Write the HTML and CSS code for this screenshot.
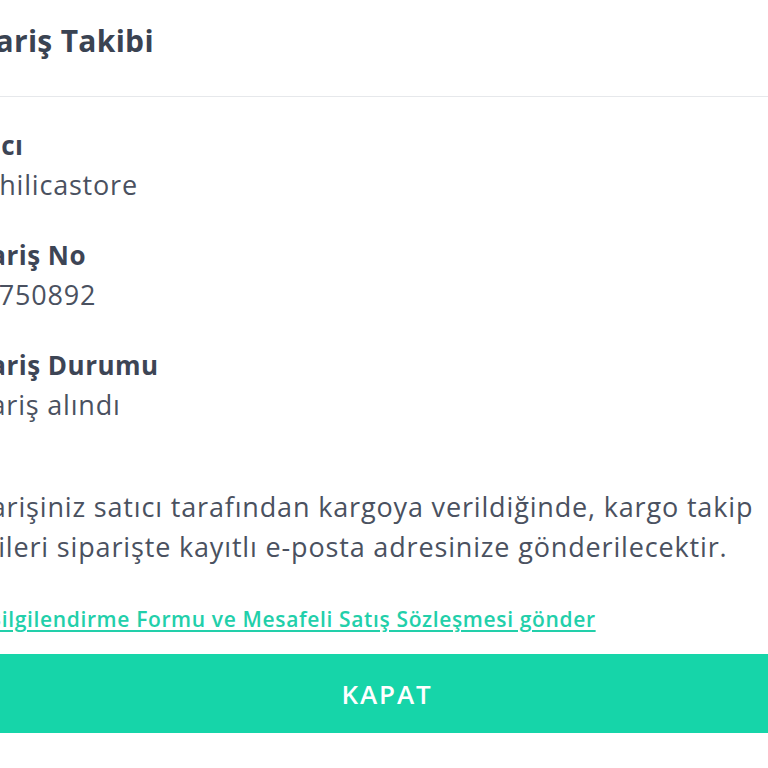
FILE: index.html
```html
<!DOCTYPE html>
<html lang="tr">
<head>
<meta charset="utf-8">
<title>Sipariş Takibi</title>
<link rel="stylesheet" href="styles.css">
</head>
<body>
<div class="modal">
  <header class="modal-header">
    <h2 class="modal-title">Sipariş Takibi</h2>
  </header>
  <div class="modal-body">
    <dl class="info">
      <div class="info-item">
        <dt class="info-label">Satıcı</dt>
        <dd class="info-value">Emihilicastore</dd>
      </div>
      <div class="info-item">
        <dt class="info-label">Sipariş No</dt>
        <dd class="info-value">203750892</dd>
      </div>
      <div class="info-item">
        <dt class="info-label">Sipariş Durumu</dt>
        <dd class="info-value">Sipariş alındı</dd>
      </div>
    </dl>
    <p class="note">Siparişiniz satıcı tarafından kargoya verildiğinde, kargo takip<br>bilgileri siparişte kayıtlı e-posta adresinize gönderilecektir.</p>
    <a class="doc-link" href="#">Ön Bilgilendirme Formu ve Mesafeli Satış Sözleşmesi gönder</a>
    <button class="btn-close" type="button">KAPAT</button>
  </div>
</div>
</body>
</html>
```
FILE: styles.css
```css
* { box-sizing: border-box; }
html, body { margin: 0; padding: 0; background: #ffffff; overflow: hidden; }
body {
  font-family: "Open Sans", "Noto Sans", sans-serif;
  color: #4a5160;
}
.modal {
  width: 922px;
  margin-left: -74px;
  background: #fff;
}
.modal-header {
  padding: 21px 24px 35px;
  border-bottom: 1px solid #e6e8eb;
}
.modal-title {
  margin: 0;
  font-size: 30px;
  line-height: 40px;
  font-weight: 700;
  color: #3a4352;
  letter-spacing: 0.3px;
}
.modal-body {
  padding: 28px 24px 30px;
  display: flex;
  flex-direction: column;
}
.info {
  margin: 0;
  display: flex;
  flex-direction: column;
  gap: 30px;
}
.info-label {
  font-size: 26px;
  line-height: 40px;
  font-weight: 700;
  color: #3d4555;
  letter-spacing: 0.5px;
}
.info-value {
  margin: 0;
  font-size: 27px;
  line-height: 40px;
  color: #4a5160;
  letter-spacing: 0.8px;
}
.note {
  margin: 62px 0 0;
  font-size: 27px;
  line-height: 40px;
  color: #4a5160;
  letter-spacing: 0.84px;
}
.doc-link {
  margin-top: 38px;
  font-size: 21px;
  line-height: 28px;
  font-weight: 600;
  color: #22cfaa;
  text-decoration: underline;
  text-underline-offset: 3px;
  letter-spacing: 0.64px;
}
.btn-close {
  margin-top: 21px;
  height: 79px;
  border: 0;
  background: #16d5a9;
  color: #ffffff;
  font-family: inherit;
  font-size: 26px;
  font-weight: 600;
  letter-spacing: 1.9px;
}
```
